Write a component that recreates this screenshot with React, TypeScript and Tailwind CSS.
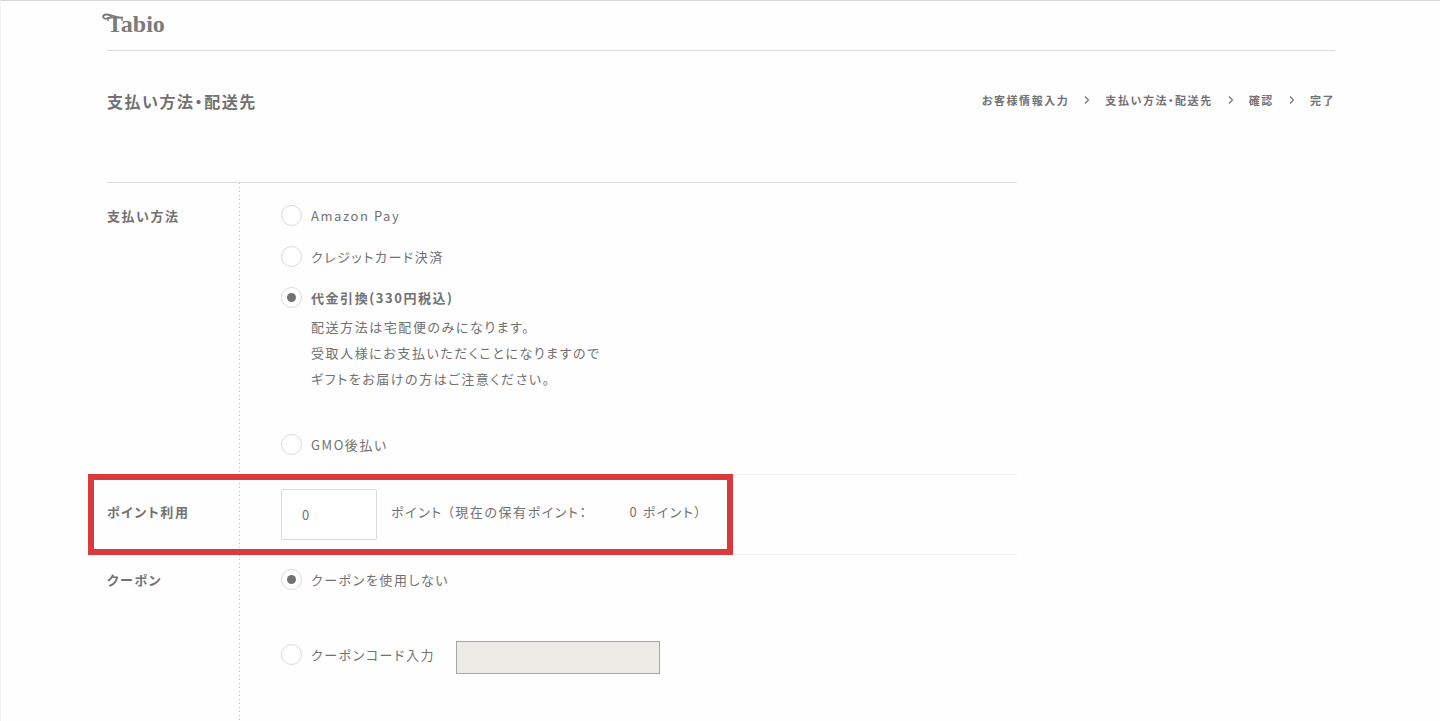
import { Fragment, type ReactNode } from "react";

const steps = ["お客様情報入力", "支払い方法・配送先", "確認", "完了"];

function Logo() {
  return (
    <a
      href="#"
      aria-label="Tabio"
      className="relative flex h-[49px] items-center self-start pb-[3px] font-['Liberation_Serif',serif] text-[24px] leading-6 font-bold tracking-normal text-[#7b7b7a]"
    >
      <svg
        className="absolute top-3 -left-[5px]"
        width="22"
        height="9"
        viewBox="0 0 22 9"
        fill="none"
        stroke="currentColor"
        strokeLinecap="round"
        aria-hidden="true"
      >
        <path
          d="M20 4.500C15 5.500 10 1.500 4.500 1.500 1.500 1.500.4 3.200 1.600 4.800 2.900 6.500 7 6 9 3.500"
          strokeWidth="1.800"
        />
      </svg>
      Tabio
    </a>
  );
}

function Choice({
  name,
  id,
  checked,
  bold,
  children,
}: {
  name: string;
  id: string;
  checked?: boolean;
  bold?: boolean;
  children: ReactNode;
}) {
  return (
    <div className="flex h-[21px] items-center gap-[9px]">
      <input
        type="radio"
        name={name}
        id={id}
        defaultChecked={checked}
        className="grid size-[21px] shrink-0 appearance-none place-content-center rounded-full border border-[#d9d9d9] bg-white checked:before:size-[9px] checked:before:rounded-full checked:before:bg-[#727171] checked:before:content-['']"
      />
      <label htmlFor={id} className={bold ? "font-bold" : "font-normal"}>
        {children}
      </label>
    </div>
  );
}

function Row({ className, children }: { className: string; children: ReactNode }) {
  return <div className={`grid grid-cols-[132px_1fr] ${className}`}>{children}</div>;
}

export default function App() {
  return (
    <div
      lang="ja"
      className="flex min-h-screen flex-col border-t border-l border-t-[#d8d7dc] border-l-[#f3f3f3] bg-[#fefefe] pr-[105px] pl-[106px] font-['Noto_Sans_CJK_JP',sans-serif] text-[13px] leading-[21px] tracking-[0.12em] text-[#727171] [font-feature-settings:'palt']"
    >
      <header className="flex flex-col border-b border-[#d9d9d9]">
        <Logo />
      </header>

      <div className="flex items-start justify-between pt-[39px] pb-[70px]">
        <h1 className="text-[16px] leading-[22px] font-bold">支払い方法・配送先</h1>
        <ol className="flex items-center gap-[15px] text-[11px] leading-5 font-bold">
          {steps.map((step, i) => (
            <Fragment key={step}>
              {i > 0 && (
                <li aria-hidden="true">
                  <svg width="6" height="8" viewBox="0 0 6 8" fill="none" stroke="currentColor">
                    <path d="M1 .5 4.500 4 1 7.500" strokeWidth="1.100" />
                  </svg>
                </li>
              )}
              <li>{step}</li>
            </Fragment>
          ))}
        </ol>
      </div>

      <form className="flex w-full max-w-[910px] grow flex-col border-t border-[#d9d9d9] bg-[linear-gradient(#bdbdbd_1px,transparent_1px)] bg-[length:1px_4px] bg-[position:132px_0] bg-repeat-y">
        <Row className="pt-[22px] pb-[19px]">
          <h2 className="font-bold">支払い方法</h2>
          <div className="flex flex-col gap-5 pl-[42px]">
            <Choice name="payment" id="amazon">Amazon Pay</Choice>
            <Choice name="payment" id="card">クレジットカード決済</Choice>
            <div>
              <Choice name="payment" id="cod" checked bold>
                代金引換(330円税込)
              </Choice>
              <p className="pt-[6px] pb-[22px] pl-[30px] leading-[26px]">
                配送方法は宅配便のみになります。
                <br />
                受取人様にお支払いただくことになりますので
                <br />
                ギフトをお届けの方はご注意ください。
              </p>
            </div>
            <Choice name="payment" id="gmo">GMO後払い</Choice>
          </div>
        </Row>

        <div className="relative">
          <Row className="h-[81px] items-center border-y border-[#f0f0f0]">
            <h2 className="pb-[6px] font-bold">
              <label htmlFor="points">ポイント利用</label>
            </h2>
            <div className="flex items-center pl-[42px]">
              <input
                id="points"
                type="text"
                defaultValue="0"
                className="h-[51px] w-24 rounded-[2px] border border-[#d9d9d9] bg-white px-5"
              />
              <span className="pb-[6px] pl-[14px]">ポイント （現在の保有ポイント：</span>
              <span className="pb-[6px] pl-[42px]">0 ポイント）</span>
            </div>
          </Row>
          <div className="pointer-events-none absolute inset-y-0 -left-[19px] w-[645px] border-6 border-[#da3a3c]" />
        </div>

        <Row className="pt-[14px]">
          <h2 className="font-bold">クーポン</h2>
          <div className="flex flex-col gap-[51px] pl-[42px]">
            <Choice name="coupon" id="coupon-none" checked>
              クーポンを使用しない
            </Choice>
            <div className="flex items-start gap-[21px]">
              <div className="pt-[3px]">
                <Choice name="coupon" id="coupon-code">クーポンコード入力</Choice>
              </div>
              <input
                type="text"
                disabled
                aria-label="クーポンコード"
                className="h-[33px] w-[204px] border border-[#a6a6a3] bg-[#ebeae4] px-2"
              />
            </div>
          </div>
        </Row>
      </form>
    </div>
  );
}
